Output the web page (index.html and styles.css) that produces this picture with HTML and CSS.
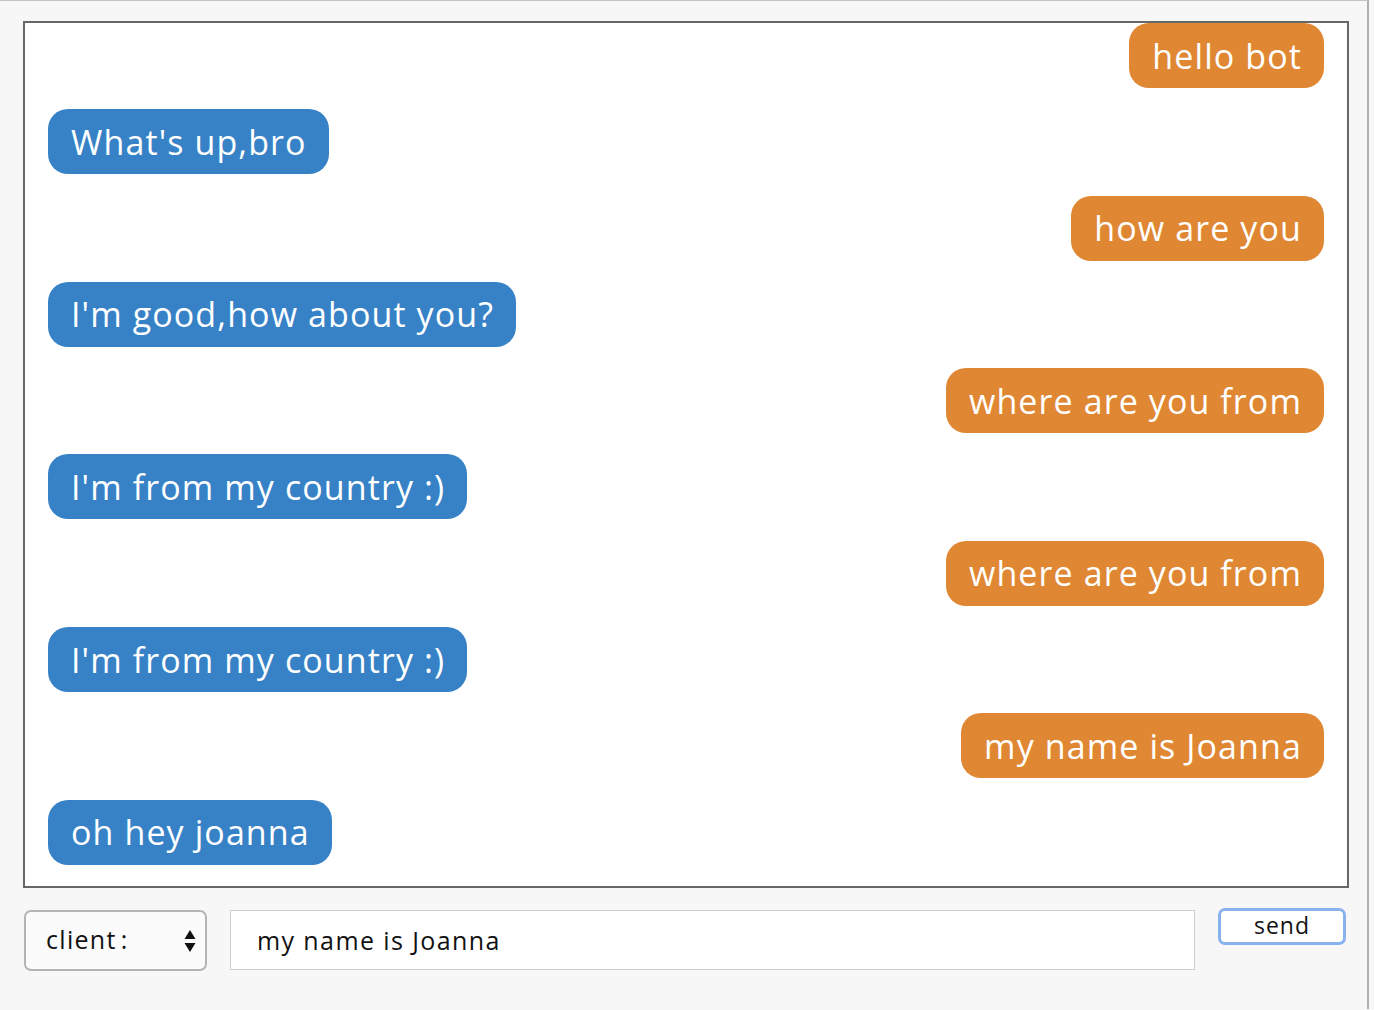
FILE: index.html
```html
<!DOCTYPE html>
<html>
<head>
<meta charset="utf-8">
<link rel="stylesheet" href="styles.css">
</head>
<body>
<div class="page">
  <div class="chat">
    <div class="msg me">hello bot</div>
    <div class="msg bot">What's up,bro</div>
    <div class="msg me">how are you</div>
    <div class="msg bot">I'm good,how about you?</div>
    <div class="msg me">where are you from</div>
    <div class="msg bot">I'm from my country :)</div>
    <div class="msg me">where are you from</div>
    <div class="msg bot">I'm from my country :)</div>
    <div class="msg me">my name is Joanna</div>
    <div class="msg bot">oh hey joanna</div>
  </div>
  <div class="controls">
    <div class="select">
      <span class="select-label">client<span class="colon">:</span></span>
      <svg class="arrows" width="12" height="24" viewBox="0 0 12 24"><path d="M6 1 L11.5 10 H0.5 Z" fill="#111"/><path d="M6 23 L11.5 14 H0.5 Z" fill="#111"/></svg>
    </div>
    <div class="text-input">my name is Joanna</div>
    <div class="send">send</div>
  </div>
</div>
</body>
</html>
```
FILE: styles.css
```css
html, body {
  margin: 0;
  padding: 0;
  background: #f7f7f7;
}
body {
  font-family: "Open Sans", "Noto Sans", sans-serif;
}
.page {
  width: 1369px;
  height: 1009px;
  border-top: 1px solid #c4c4c4;
  border-right: 2px solid #b0b0b0;
  box-sizing: border-box;
  padding: 20px 0 0 23px;
}
.chat {
  width: 1326px;
  height: 867px;
  box-sizing: border-box;
  border: 2px solid #676767;
  background: #fff;
  display: flex;
  flex-direction: column;
  gap: 21.3px;
  padding: 0 23px;
}
.msg {
  height: 65px;
  box-sizing: border-box;
  border-radius: 20px;
  padding: 0 22px 0 23px;
  display: flex;
  align-items: center;
  color: #fff;
  font-size: 34px;
  letter-spacing: 1.1px;
  white-space: nowrap;
}
.me {
  align-self: flex-end;
  background: #e08733;
}
.bot {
  align-self: flex-start;
  background: #3782c6;
}
.controls {
  display: flex;
  align-items: flex-start;
  margin-top: 20px;
}
.select {
  width: 183px;
  height: 61px;
  margin-top: 2px;
  margin-left: 1px;
  box-sizing: border-box;
  border: 2px solid #b4b4b4;
  border-radius: 7px;
  background: #fbfbfb;
  display: flex;
  align-items: center;
  justify-content: space-between;
  padding: 0 9px 0 20px;
  font-size: 25px;
  color: #111;
}
.select-label {
  margin-top: -4px;
  letter-spacing: 1.3px;
}
.colon {
  margin-left: 4px;
}
.arrows {
  display: block;
}
.text-input {
  width: 965px;
  height: 60px;
  margin-top: 2px;
  margin-left: 23px;
  box-sizing: border-box;
  border: 1px solid #cfcfcf;
  background: #fff;
  display: flex;
  align-items: center;
  padding: 0 26px;
  font-size: 25px;
  color: #111;
  letter-spacing: 1.4px;
}
.send {
  width: 128px;
  height: 37px;
  margin-left: 23px;
  box-sizing: border-box;
  border: 3px solid #88b2ee;
  border-radius: 7px;
  background: #fff;
  display: flex;
  align-items: center;
  justify-content: center;
  font-size: 23px;
  letter-spacing: 1px;
  color: #111;
  line-height: 1;
  padding-bottom: 3px;
}
```
